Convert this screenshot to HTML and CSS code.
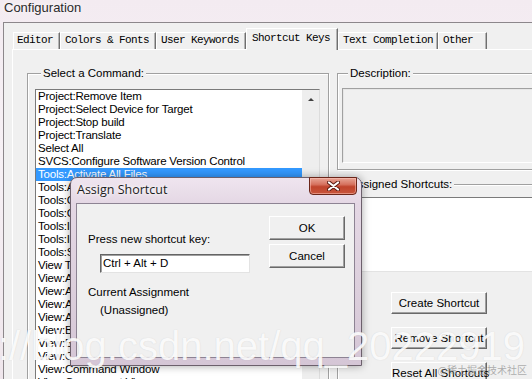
FILE: index.html
```html
<!DOCTYPE html>
<html>
<head>
<meta charset="utf-8">
<title>Configuration</title>
<link rel="stylesheet" href="styles.css">
</head>
<body>
<div class="titlebar">Configuration</div>
<div class="window">
  <div class="tabs">
    <div class="tab t-editor">Editor</div>
    <div class="tab t-colors">Colors &amp; Fonts</div>
    <div class="tab t-user">User Keywords</div>
    <div class="tab t-short active">Shortcut Keys</div>
    <div class="tab t-text">Text Completion</div>
    <div class="tab t-other">Other</div>
  </div>
  <div class="page">
    <fieldset class="group cmd">
      <legend>Select a Command:</legend>
      <div class="listbox">
        <ul class="items">
          <li>Project:Remove Item</li>
          <li>Project:Select Device for Target</li>
          <li>Project:Stop build</li>
          <li>Project:Translate</li>
          <li>Select All</li>
          <li>SVCS:Configure Software Version Control</li>
          <li class="sel">Tools:Activate All Files</li>
          <li>Tools:Analyze Current File</li>
          <li>Tools:Configure Merge Tool</li>
          <li>Tools:Customize Tools Menu...</li>
          <li>Tools:Inspect Current File</li>
          <li>Tools:Install...</li>
          <li>Tools:Set-up PC-Lint...</li>
          <li>View Toolbars</li>
          <li>View:Analysis Window</li>
          <li>View:Analyzer Window</li>
          <li>View:Assembly Window</li>
          <li>View:Autos Window</li>
          <li>View:Books Window</li>
          <li>View:Build Output Window</li>
          <li>View:Call Stack Window</li>
          <li>View:Command Window</li>
          <li>View:Component Viewer</li>
        </ul>
        <div class="vscroll"><span class="uparrow"></span></div>
      </div>
    </fieldset>
    <div class="right">
      <fieldset class="group desc">
        <legend>Description:</legend>
        <div class="descfield"></div>
      </fieldset>
      <fieldset class="group assigned">
        <legend>Assigned Shortcuts:</legend>
        <div class="assignlist"></div>
        <div class="btncol">
          <button class="btn wide">Create Shortcut</button>
          <button class="btn wide">Remove Shortcut</button>
          <button class="btn wide">Reset All Shortcuts</button>
        </div>
      </fieldset>
    </div>
  </div>
</div>

<div class="dialog">
  <div class="dlg-title">Assign Shortcut</div>
  <div class="dlg-close">
    <svg width="13" height="10" viewBox="0 0 13 10">
      <path d="M2 1.5 L11 8.5 M11 1.5 L2 8.5" stroke="#5a1a10" stroke-width="4" stroke-linecap="round"/>
      <path d="M2 1.5 L11 8.5 M11 1.5 L2 8.5" stroke="#ffffff" stroke-width="2.2" stroke-linecap="round"/>
    </svg>
  </div>
  <div class="dlg-client">
    <div class="dlg-left">
      <div class="lbl">Press new shortcut key:</div>
      <div class="keyinput">Ctrl + Alt + D</div>
      <div class="lbl cur">Current Assignment</div>
      <div class="lbl indent">(Unassigned)</div>
    </div>
    <div class="dlg-right">
      <button class="btn dbtn">OK</button>
      <button class="btn dbtn">Cancel</button>
    </div>
  </div>
</div>

<div class="watermark">https://blog.csdn.net/qq_20222919</div>
<div class="wm2">@稀土掘金技术社区</div>
</body>
</html>
```

FILE: styles.css
```css
html, body {
  margin: 0;
  padding: 0;
}
body {
  width: 532px;
  height: 379px;
  overflow: hidden;
  position: relative;
  background: linear-gradient(to bottom, #f3ebf1, #f7f1f5 40%, #efe6ec);
  font-family: "Liberation Sans", Arial, sans-serif;
  font-size: 11.5px;
  color: #000;
}

.titlebar {
  height: 22px;
  box-sizing: border-box;
  padding-left: 4px;
  font-family: "Liberation Sans", Arial, sans-serif;
  font-size: 13px;
  line-height: 16px;
  color: #2a2a2a;
  text-shadow: 0 0 6px #fff;
}

.window {
  margin-left: 3px;
  width: 640px;
  height: 400px;
  border-left: 1px solid #8c878b;
  border-top: 1px solid #8c878b;
  background: #f0f0f0;
}

/* tabs */
.tabs {
  display: flex;
  align-items: flex-end;
  height: 26px;
  padding-left: 9px;
}
.tab {
  box-sizing: border-box;
  height: 17px;
  border-top: 1px solid #ffffff;
  border-left: 1px solid #ffffff;
  border-right: 1px solid #6f6f6f;
  box-shadow: inset -1px 0 0 #b4b4b4;
  padding-left: 4px;
  font-family: "Liberation Mono", "Courier New", monospace;
  font-size: 11px;
  letter-spacing: -0.6px;
  line-height: 15px;
  white-space: nowrap;
  background: #f0f0f0;
}
.t-editor { width: 47px; padding-left: 3px; }
.t-colors { width: 96px; }
.t-user { width: 90px; }
.t-short { width: 92px; }
.t-text { width: 100px; }
.t-other { width: 49px; }
.tab.active {
  height: 22px;
  margin-bottom: -1px;
  line-height: 19px;
  position: relative;
  z-index: 1;
  padding-left: 5px;
}

/* page */
.page {
  margin-left: 8px;
  border-top: 1px solid #ffffff;
  border-left: 1px solid #ffffff;
  display: flex;
  align-items: flex-start;
  padding: 16px 0 0 14px;
  height: 400px;
}

fieldset.group {
  margin: 0;
  padding: 0;
  min-width: 0;
  box-sizing: border-box;
  border: 1px solid #a0a0a0;
  box-shadow: inset 1px 1px 0 #ffffff, 1px 1px 0 #ffffff;
}
fieldset.group legend {
  font-size: 11.5px;
  line-height: 14px;
  padding: 0 2px;
  margin-left: 6px;
  background: #f0f0f0;
  white-space: nowrap;
}

.cmd {
  width: 302px;
  height: 420px;
  padding: 9px 8px 0 7px !important;
}
.listbox {
  display: flex;
  height: 320px;
  border: 1px solid;
  border-color: #7a7a7a #dcdcdc #dcdcdc #7a7a7a;
  background: #ffffff;
}
.items {
  flex: 1;
  min-width: 0;
  list-style: none;
  margin: 0;
  padding: 0;
}
.items li {
  height: 13px;
  line-height: 13px;
  padding-left: 2px;
  white-space: nowrap;
  overflow: hidden;
  font-size: 11.5px;
  letter-spacing: -0.2px;
}
.items li.sel {
  background: #3399ff;
  color: #ffffff;
}
.vscroll {
  width: 17px;
  background: #eeeeee;
  display: flex;
  justify-content: center;
}
.uparrow {
  margin-top: 8px;
  width: 0;
  height: 0;
  border-left: 3px solid transparent;
  border-right: 3px solid transparent;
  border-bottom: 3px solid #404040;
}

.right {
  margin-left: 8px;
  width: 240px;
  display: flex;
  flex-direction: column;
}
.desc {
  padding: 8px 0 6px 4px !important;
}
.descfield {
  height: 75px;
  box-sizing: border-box;
  border: 1px solid;
  border-color: #a0a0a0 #ffffff #ffffff #a0a0a0;
  box-shadow: inset 1px 1px 0 #e6e6e6;
  background: #f0f0f0;
}
.assigned {
  margin-top: 7px !important;
  padding: 6px 0 20px 4px !important;
}
.assignlist {
  height: 75px;
  box-sizing: border-box;
  border: 1px solid;
  border-color: #7a7a7a #ffffff #e3e3e3 #7a7a7a;
  background: #ffffff;
}
.btncol {
  display: flex;
  flex-direction: column;
  gap: 13px;
  margin: 20px 0 0 49px;
}

.btn {
  box-sizing: border-box;
  margin: 0;
  padding: 0;
  border: 1px solid;
  border-color: #ffffff #696969 #696969 #ffffff;
  box-shadow: inset -1px -1px 0 #a0a0a0;
  background: #f0f0f0;
  font-family: "Liberation Sans", Arial, sans-serif;
  font-size: 11.5px;
  color: #000;
  white-space: nowrap;
}
.btn.wide {
  width: 96px;
  height: 22px;
}

/* dialog */
.dialog {
  position: absolute;
  left: 70px;
  top: 177px;
  width: 292px;
  height: 189px;
  box-sizing: border-box;
  border: 1px solid #6c606c;
  border-radius: 7px 7px 0 0;
  padding: 0 6px 7px 5px;
  background: linear-gradient(to bottom, #efe5ef 0%, #e4d7e4 14%, #dccfdc 60%, #d5c6d6 100%);
  box-shadow: 0 0 8px rgba(0, 0, 0, 0.35);
}
.dlg-title {
  height: 25px;
  padding-left: 1px;
  font-family: "Open Sans", "Liberation Sans", sans-serif;
  font-size: 12.5px;
  line-height: 23px;
  color: #1c1c1c;
  text-shadow: 0 0 6px #ffffff, 0 0 3px #ffffff;
}
.dlg-close {
  position: absolute;
  top: -1px;
  right: 4px;
  width: 48px;
  height: 18px;
  box-sizing: border-box;
  border: 1px solid #6b2519;
  border-radius: 0 0 4px 4px;
  background: linear-gradient(to bottom, #e8a596 0%, #d6725f 40%, #c0432c 55%, #c8553c 100%);
  box-shadow: inset 0 0 0 1px rgba(255, 200, 190, 0.5);
  display: flex;
  align-items: center;
  justify-content: center;
}
.dlg-client {
  height: 155px;
  box-sizing: border-box;
  border: 1px solid #8d8393;
  background: #f0f0f0;
  display: grid;
  grid-template-columns: 192px 76px;
  align-items: start;
}
.dlg-left {
  padding: 29px 0 0 11px;
}
.lbl {
  font-size: 11.5px;
  line-height: 13px;
  white-space: nowrap;
}
.keyinput {
  margin: 8px 0 0 12px;
  width: 150px;
  height: 19px;
  box-sizing: border-box;
  border: 1px solid;
  border-color: #646464 #e3e3e3 #e3e3e3 #646464;
  box-shadow: inset 1px 1px 0 #a0a0a0;
  background: #ffffff;
  padding-left: 2px;
  font-size: 11.5px;
  line-height: 17px;
}
.lbl.cur {
  margin-top: 13px;
}
.lbl.indent {
  margin: 5px 0 0 12px;
}
.dlg-right {
  padding-top: 12px;
  display: flex;
  flex-direction: column;
  gap: 4px;
}
.btn.dbtn {
  width: 76px;
  height: 24px;
}

/* watermark */
.watermark {
  position: absolute;
  right: 7px;
  top: 326px;
  font-family: "Liberation Sans", Arial, sans-serif;
  font-size: 40px;
  line-height: 40px;
  white-space: nowrap;
  color: rgba(255, 255, 255, 0.88);
  text-shadow: 0 0 1px rgba(120, 120, 120, 0.25);
}
.wm2 {
  position: absolute;
  right: 5px;
  bottom: 2px;
  font-family: "Noto Sans CJK SC", sans-serif;
  font-size: 10px;
  line-height: 14px;
  color: rgba(150, 150, 150, 0.75);
  white-space: nowrap;
}
```
